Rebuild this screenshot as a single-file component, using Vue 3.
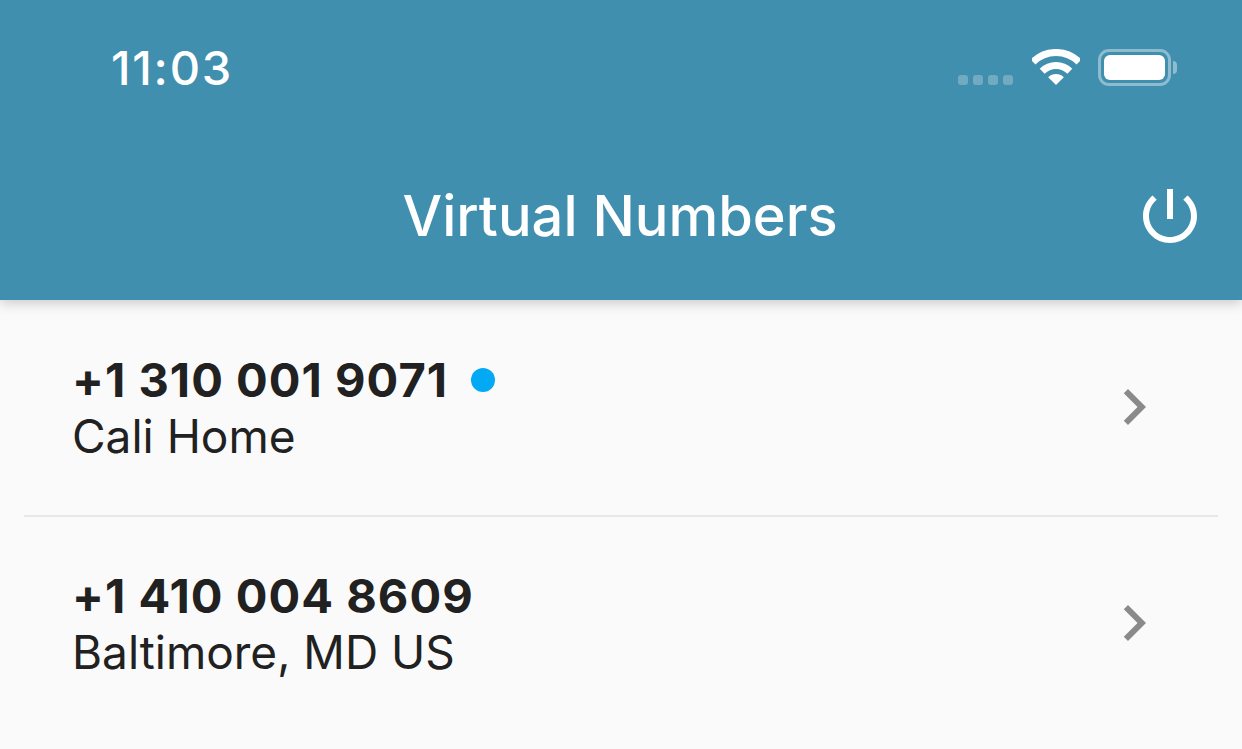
<script setup>
const rows = [
  { number: '+1 310 001 9071', label: 'Cali Home', unread: true },
  { number: '+1 410 004 8609', label: 'Baltimore, MD US', unread: false },
]
</script>

<template>
  <div class="screen">
    <header class="header">
      <div class="status">
        <span class="time">11:03</span>
        <div class="status-icons">
          <div class="signal"><i></i><i></i><i></i><i></i></div>
          <svg class="wifi" width="48" height="37" viewBox="0 0 48 37" fill="none">
            <path d="M1 13A32.5 32.5 0 0 1 47 13" stroke="#fff" stroke-width="7" />
            <path d="M10.2 22.2A19.5 19.5 0 0 1 37.8 22.2" stroke="#fff" stroke-width="7" />
            <path d="M24 36L16.2 28.2A11 11 0 0 1 31.8 28.2Z" fill="#fff" />
          </svg>
          <div class="battery"><div class="battery-fill"></div></div>
          <div class="battery-nub"></div>
        </div>
      </div>
      <div class="titlebar">
        <h1 class="title">Virtual Numbers</h1>
        <svg class="power" width="72" height="72" viewBox="0 0 24 24" fill="#fff">
          <path d="M13 3h-2v10h2V3zm4.83 2.17l-1.42 1.42C17.99 7.86 19 9.81 19 12c0 3.87-3.13 7-7 7s-7-3.13-7-7c0-2.19 1.01-4.14 2.58-5.42L6.17 5.17C4.23 6.82 3 9.26 3 12c0 4.97 4.03 9 9 9s9-4.03 9-9c0-2.74-1.23-5.18-3.17-6.83z" />
        </svg>
      </div>
    </header>
    <main class="list">
      <div v-for="row in rows" :key="row.number" class="row">
        <div class="text">
          <div class="number">
            <span>{{ row.number }}</span>
            <span v-if="row.unread" class="dot"></span>
          </div>
          <div class="label">{{ row.label }}</div>
        </div>
        <svg class="chevron" width="72" height="72" viewBox="0 0 24 24" fill="#8a8a8a">
          <path d="M10 6L8.59 7.41 13.17 12l-4.58 4.59L10 18l6-6z" />
        </svg>
      </div>
    </main>
  </div>
</template>

<style>
html, body { margin: 0; background: #fafafa; }
</style>

<style scoped>
.screen {
  width: 1242px;
  height: 749px;
  overflow: hidden;
  background: #fafafa;
  font-family: Inter, "Liberation Sans", sans-serif;
}
.header {
  height: 300px;
  background: #418fae;
  box-shadow: 0 3px 12px rgba(0, 0, 0, 0.2);
  position: relative;
  color: #fff;
}
.status {
  height: 132px;
  box-sizing: border-box;
  padding: 42px 65px 0 111px;
  display: flex;
  justify-content: space-between;
  align-items: flex-start;
}
.time {
  font-size: 47px;
  line-height: 52px;
  font-weight: 500;
  letter-spacing: 1.8px;
}
.status-icons {
  display: flex;
  align-items: flex-start;
  margin-top: 7px;
}
.signal {
  display: flex;
  gap: 5px;
  margin-top: 26px;
  margin-right: 19px;
}
.signal i {
  width: 10px;
  height: 10px;
  border-radius: 3px;
  background: rgba(255, 255, 255, 0.25);
}
.wifi { margin-right: 18px; }
.battery {
  width: 73px;
  height: 37px;
  box-sizing: border-box;
  padding: 3px;
  border: 3px solid rgba(255, 255, 255, 0.4);
  border-radius: 11px;
}
.battery-fill {
  width: 100%;
  height: 100%;
  background: #fff;
  border-radius: 6px;
}
.battery-nub {
  width: 4px;
  height: 13px;
  margin: 12px 0 0 2px;
  background: rgba(255, 255, 255, 0.4);
  border-radius: 0 6px 6px 0;
}
.titlebar {
  height: 168px;
  position: relative;
  display: flex;
  justify-content: center;
}
.title {
  margin: 49px 2px 0 0;
  font-size: 56px;
  line-height: 70px;
  font-weight: 500;
}
.power {
  position: absolute;
  right: 36px;
  top: 48px;
}
.list {
  margin: 0 24px;
}
.row {
  height: 217px;
  box-sizing: border-box;
  display: flex;
  align-items: center;
  justify-content: space-between;
  padding: 0 48px 2px 48px;
  border-bottom: 2px solid #e8e8e8;
  color: #212121;
}
.row:last-child {
  height: 216px;
  border-bottom-color: transparent;
}
.text {
  margin-top: 3px;
}
.number {
  display: flex;
  align-items: center;
  gap: 23px;
  font-size: 47px;
  line-height: 56px;
  font-weight: 700;
  letter-spacing: 1.05px;
}
.dot {
  width: 24px;
  height: 24px;
  border-radius: 50%;
  background: #03a9f4;
}
.label {
  font-size: 46px;
  line-height: 57px;
  font-weight: 400;
}
.chevron {
  flex: none;
}
</style>
